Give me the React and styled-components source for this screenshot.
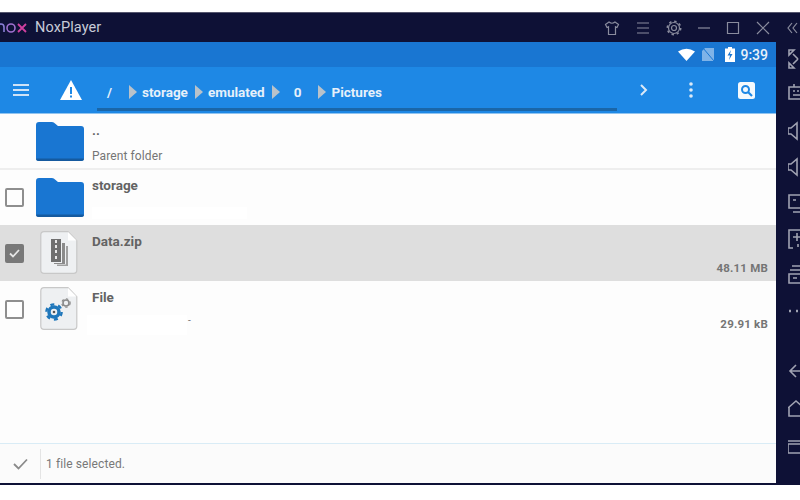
import React from 'react';
import styled, { createGlobalStyle } from 'styled-components';

const Global = createGlobalStyle`
  html, body { margin: 0; padding: 0; background: #fff; width: 800px; height: 500px; overflow: hidden; }
  body { font-family: Roboto, "Liberation Sans", sans-serif; }
`;
const Page = styled.div`
  width: 800px; height: 500px; padding-top: 12px; box-sizing: border-box; background: #fff; overflow: hidden;
`;
const Window = styled.div`
  width: 800px; height: 473px; background: #0e1136; border-top: 1px solid #55566e; box-sizing: border-box;
  display: flex; flex-direction: column; overflow: hidden;
`;
const TitleBar = styled.header`
  height: 29px; flex: none; display: flex; align-items: center; color: #c9cbd6;
`;
const Logo = styled.svg`
  width: 29px; height: 14px; flex: none; margin-left: -1px;
`;
const AppName = styled.span`
  font-size: 14.5px; color: #c8cbd8; margin-left: 7px; letter-spacing: .1px;
`;
const WinControls = styled.div`
  margin-left: auto; display: flex; align-items: center; width: 196px; flex: none; margin-right: 0; height: 100%;
`;
const WinButton = styled.svg`
  width: 16px; height: 16px; flex: none; margin-right: ${p => p.$gap}px;
  fill: none; stroke: #8a8c9e; stroke-width: 1.2;
`;
const Body = styled.div`
  flex: 1; display: flex; min-height: 0;
`;
const Screen = styled.main`
  width: 776px; flex: none; display: flex; flex-direction: column; background: #fdfdfd;
`;
const StatusBar = styled.div`
  height: 25px; flex: none; background: #1976d2; display: flex; align-items: center; justify-content: flex-end;
  padding-right: 8px; color: #e8f1fb; font-size: 14px; font-weight: 500;
`;
const StatusIcon = styled.svg`
  flex: none; margin-right: ${p => p.$gap}px;
`;
const Toolbar = styled.div`
  height: 46px; flex: none; background: #1e88e5; display: flex; align-items: center; color: #e9f2fb;
  border-bottom: 1px solid #90c4f0; box-sizing: content-box;
`;
const ToolIcon = styled.svg`
  flex: none; margin-left: ${p => p.$left}px;
`;
const Crumbs = styled.div`
  margin-left: 15px; width: 520px; height: 40px; margin-top: 2px; flex: none; box-sizing: border-box;
  display: flex; align-items: center; border-bottom: 3px solid #1a66a8; font-size: 13.5px; font-weight: 700; padding-top: 5px;
`;
const Crumb = styled.span`
  margin-left: ${p => p.$left}px; color: #e6f0fa;
`;
const Arrow = styled.i`
  flex: none; width: 0; height: 0; margin-left: ${p => p.$left}px;
  border-left: 8px solid #b9c2ca; border-top: 7px solid transparent; border-bottom: 7px solid transparent;
`;
const List = styled.div`
  flex: 1; min-height: 0; display: flex; flex-direction: column;
`;
const Row = styled.div`
  height: ${p => p.$h}px; flex: none; box-sizing: border-box; display: flex; position: relative;
  background: ${p => p.$selected ? '#dedede' : 'transparent'};
  border-bottom: ${p => p.$line ? '2px solid #eeeeee' : 'none'};
`;
const CheckSlot = styled.div`
  width: 28px; flex: none; display: flex; align-items: center; padding-left: 5px; box-sizing: border-box;
  padding-top: ${p => p.$top || 0}px;
`;
const Check = styled.div`
  width: 15px; height: 15px; border: 2px solid ${p => p.$on ? '#787878' : '#8e8e8e'}; border-radius: 2px;
  background: ${p => p.$on ? '#787878' : 'transparent'}; display: flex; align-items: center; justify-content: center;
`;
const IconSlot = styled.div`
  width: 64px; flex: none; display: flex; padding-left: ${p => p.$left}px; padding-top: ${p => p.$top}px; box-sizing: border-box;
`;
const Texts = styled.div`
  flex: 1; min-width: 0; display: flex; flex-direction: column; position: relative;
`;
const Name = styled.div`
  font-size: 13.5px; font-weight: 700; color: #636363; line-height: 16px; margin-top: ${p => p.$top}px;
`;
const Sub = styled.div`
  font-size: 12px; color: #757575; line-height: 14px; margin-top: ${p => p.$top}px; letter-spacing: .1px;
`;
const Redact = styled.div`
  width: ${p => p.$w}px; height: ${p => p.$h}px; background: #ffffff; margin-top: ${p => p.$top}px; margin-left: ${p => p.$left}px; flex: none;
  display: flex; align-items: center;
`;
const RedactRow = styled.div`
  display: flex; align-items: center; color: #777; font-size: 10px;
`;
const Dot = styled.span`
  margin-left: 1px; margin-top: 2px; line-height: 1;
`;
const Size = styled.div`
  position: absolute; right: 8px; bottom: ${p => p.$bottom}px; font-size: 11.5px; font-weight: 700; color: #757575; letter-spacing: .2px;
`;
const Footer = styled.footer`
  height: 40px; flex: none; border-top: 1px solid #d9ecf6; display: flex; align-items: center; background: #fbfbfb; box-sizing: border-box;
`;
const FooterIcon = styled.div`
  width: 40px; height: 30px; flex: none; border-right: 1px solid #e4e4e4; display: flex; align-items: center; justify-content: center;
  margin-top: 1px; box-sizing: content-box; padding-right: 0; width: 40px;
`;
const FooterText = styled.span`
  margin-left: 5px; font-size: 12px; color: #787878; letter-spacing: .1px;
`;
const WindowBottom = styled.div`
  height: 2px; flex: none; background: #0e1136;
`;
const Sidebar = styled.aside`
  flex: 1; min-width: 0; display: flex; flex-direction: column; overflow: hidden; padding-left: 12px;
`;
const SideIcon = styled.svg`
  flex: none; width: 24px; height: 24px; fill: none; stroke: #a0a2b2; stroke-width: 1.6; margin-top: ${p => p.$top}px;
`;

const Folder = () => (
  <svg width="48" height="39" viewBox="0 0 48 39">
    <path d="M3 0h13q2 0 3 1.5L22 4h23q3 0 3 3v29q0 3-3 3H3q-3 0-3-3V3q0-3 3-3z" fill="#1976d2" />
    <path d="M0 36.5h48q0 2.500-3 2.500H3q-3 0-3-2.500z" fill="#155a9f" />
  </svg>
);
const Doc = ({ children }) => (
  <svg width="38" height="43" viewBox="0 0 38 43">
    <path d="M4 .7h24l8.800 9V39q0 3.300-3.300 3.300H4Q.8 42.300.8 39V4Q.8.700 4 .7z" fill="#eef0f2" stroke="#c8c8c8" strokeWidth="1.200" />
    <path d="M28 1v8.500h8.500z" fill="#fff" />
    {children}
  </svg>
);
const Gear = ({ cx, cy, r, color, sw }) => (
  <g>
    <circle cx={cx} cy={cy} r={r} fill="none" stroke={color} strokeWidth={sw} />
    <circle cx={cx} cy={cy} r={r + sw * 0.75} fill="none" stroke={color} strokeWidth={sw * 0.7} strokeDasharray={`${r * 0.8} ${r * 0.8}`} />
  </g>
);

export default function App() {
  return (
    <Page>
      <Global />
      <Window>
        <TitleBar>
          <Logo viewBox="0 0 29 14">
            <path d="M-1 11V6q0-3 3-3t3 3v5" fill="none" stroke="#8a7fd8" strokeWidth="1.600" />
            <circle cx="12" cy="7" r="4" fill="none" stroke="#a070d0" strokeWidth="1.600" />
            <path d="M19 3l8 8M27 3l-8 8" stroke="#d040a0" strokeWidth="1.800" />
          </Logo>
          <AppName>NoxPlayer</AppName>
          <WinControls>
            <WinButton $gap={15} viewBox="0 0 16 16"><path d="M5 2L1.500 4.500l1.500 3 1.500-.7V14.500h7V6.800l1.500.7 1.500-3L11 2q-3 2.500-6 0z" /></WinButton>
            <WinButton $gap={15} viewBox="0 0 16 16"><path d="M2 3h12M2 8h12M2 13h12" /></WinButton>
            <WinButton $gap={14} viewBox="0 0 16 16"><circle cx="8" cy="8" r="2.500" /><circle cx="8" cy="8" r="5.500" /><circle cx="8" cy="8" r="6.700" strokeDasharray="2.400 2.860" strokeWidth="1.600" /></WinButton>
            <WinButton $gap={13} viewBox="0 0 16 16"><path d="M2 8h12" /></WinButton>
            <WinButton $gap={14} viewBox="0 0 16 16"><path d="M2.500 2.500h11v11h-11z" /></WinButton>
            <WinButton $gap={14} viewBox="0 0 16 16"><path d="M2 2l12 12M14 2L2 14" /></WinButton>
            <WinButton $gap={0} viewBox="0 0 16 16"><path d="M7 3L3 8l4 5M12 3L8 8l4 5" /></WinButton>
          </WinControls>
        </TitleBar>
        <Body>
          <Screen>
            <StatusBar>
              <StatusIcon $gap={7} width="17" height="13" viewBox="0 0 17 13"><path d="M0 3.500Q8.500-2 17 3.500L8.500 13z" fill="#fff" /></StatusIcon>
              <StatusIcon $gap={11} width="12" height="13" viewBox="0 0 12 13"><path d="M3 0h9v13H0V3z" fill="#7fb3e8" /><path d="M1 0l11 13" stroke="#1976d2" strokeWidth="1" /></StatusIcon>
              <StatusIcon $gap={5} width="10" height="15" viewBox="0 0 10 15"><path d="M3 0h4v1.500h3V15H0V1.500h3z" fill="#fff" /><path d="M6 3L2.500 8.500H5L4 13l3.500-6H5z" fill="#1976d2" /></StatusIcon>
              <span>9:39</span>
            </StatusBar>
            <Toolbar>
              <ToolIcon $left={12} width="18" height="14" viewBox="0 0 18 14"><path d="M1 2h16M1 7h16M1 12h16" stroke="#cfe3f7" strokeWidth="2" /></ToolIcon>
              <ToolIcon $left={30} width="22" height="20" viewBox="0 0 22 20"><path d="M11 0l11 20H0z" fill="#fff" /><path d="M10 7h2v7h-2zM10 15.500h2v2h-2z" fill="#1e88e5" /></ToolIcon>
              <Crumbs>
                <Crumb $left={10}>/</Crumb>
                <Arrow $left={17} />
                <Crumb $left={5}>storage</Crumb>
                <Arrow $left={7} />
                <Crumb $left={5}>emulated</Crumb>
                <Arrow $left={7} />
                <Crumb $left={14}>0</Crumb>
                <Arrow $left={17} />
                <Crumb $left={5}>Pictures</Crumb>
              </Crumbs>
              <ToolIcon $left={22} width="10" height="12" viewBox="0 0 10 12"><path d="M2 1l5 5-5 5" fill="none" stroke="#dbe9f7" strokeWidth="2" /></ToolIcon>
              <ToolIcon $left={40} width="4" height="16" viewBox="0 0 4 16"><circle cx="2" cy="2" r="1.800" fill="#dbe9f7" /><circle cx="2" cy="8" r="1.800" fill="#dbe9f7" /><circle cx="2" cy="14" r="1.800" fill="#dbe9f7" /></ToolIcon>
              <ToolIcon $left={45} width="17" height="17" viewBox="0 0 17 17"><rect width="17" height="17" rx="2.500" fill="#f4f9fd" /><circle cx="7.500" cy="7.500" r="3.500" fill="none" stroke="#1e88e5" strokeWidth="2" /><path d="M10 10l4 4" stroke="#1e88e5" strokeWidth="2.200" /></ToolIcon>
            </Toolbar>
            <List>
              <Row $h={56} $line>
                <CheckSlot />
                <IconSlot $left={8} $top={8}><Folder /></IconSlot>
                <Texts><Name $top={8}>..</Name><Sub $top={11}>Parent folder</Sub></Texts>
              </Row>
              <Row $h={55}>
                <CheckSlot $top={0}><Check /></CheckSlot>
                <IconSlot $left={8} $top={8}><Folder /></IconSlot>
                <Texts><Name $top={7}><span>storage</span></Name><Redact $w={155} $h={12} $top={14} $left={0} /></Texts>
              </Row>
              <Row $h={56} $selected>
                <CheckSlot>
                  <Check $on>
                    <svg width="11" height="9" viewBox="0 0 11 9"><path d="M1 4.500l3 3 6-6.500" fill="none" stroke="#e6e6e6" strokeWidth="1.800" /></svg>
                  </Check>
                </CheckSlot>
                <IconSlot $left={12} $top={6}>
                  <Doc>
                    <path d="M11 8h10v23H11z" fill="#6f6f6f" />
                    <path d="M22 12h3v21H14v-1h8z" fill="#8a8a8a" />
                    <path d="M26 15h2v20H17v-1.500h9z" fill="#a0a0a0" />
                    <path d="M15 9h2v3h-2zM15 14h2v3h-2zM15 19h2v3h-2zM15 25h2v3h-2z" fill="#e8e8e8" />
                  </Doc>
                </IconSlot>
                <Texts><Name $top={8}>Data.zip</Name><Size $bottom={6}>48.11 MB</Size></Texts>
              </Row>
              <Row $h={56}>
                <CheckSlot><Check /></CheckSlot>
                <IconSlot $left={12} $top={6}>
                  <Doc>
                    <Gear cx={14} cy={25} r={5} color="#1f77bb" sw={3.500} />
                    <circle cx={14} cy={25} r={1.300} fill="#555" />
                    <Gear cx={26} cy={16} r={3} color="#8a8a8a" sw={1.600} />
                  </Doc>
                </IconSlot>
                <Texts>
                  <Name $top={8}>File</Name>
                  <RedactRow><Redact $w={100} $h={20} $top={10} $left={-5} /><Dot>-</Dot></RedactRow>
                  <Size $bottom={6}>29.91 kB</Size>
                </Texts>
              </Row>
            </List>
            <Footer>
              <FooterIcon>
                <svg width="15" height="12" viewBox="0 0 15 12"><path d="M1 6l4.500 4.500L14 1.500" fill="none" stroke="#8a8a8a" strokeWidth="1.800" /></svg>
              </FooterIcon>
              <FooterText>1 file selected.</FooterText>
            </Footer>
            <WindowBottom />
          </Screen>
          <Sidebar>
            <SideIcon $top={7} viewBox="0 0 24 24" style={{ marginLeft: 0 }}><path d="M1 1h5L1 6zM10 10l-5-5M1 19h5l-5-5zM5 15l5-5" /></SideIcon>
            <SideIcon $top={8} viewBox="0 0 24 24"><path d="M1 6h20v12H1zM5 10h2M9 10h2M13 10h2M5 14h10M6 6V3" /></SideIcon>
            <SideIcon $top={14} viewBox="0 0 24 24"><path d="M0 9h3l6-5v16l-6-5H0z" /></SideIcon>
            <SideIcon $top={12} viewBox="0 0 24 24"><path d="M0 9h3l6-5v16l-6-5H0z" /></SideIcon>
            <SideIcon $top={12} viewBox="0 0 24 24"><path d="M1 4h20v13H1zM5 9h3M5 21h16" /></SideIcon>
            <SideIcon $top={12} viewBox="0 0 24 24"><path d="M14 3H1v18h4M5 10h8M9 6v8M10 20v-3M14 20v-3" /></SideIcon>
            <SideIcon $top={12} viewBox="0 0 24 24"><path d="M4 3h16M2 7h18M1 11h20v9H1zM5 15h4" /></SideIcon>
            <SideIcon $top={12} viewBox="0 0 24 24"><path d="M1 12h2M8 12h2" strokeWidth="2.500" /></SideIcon>
            <SideIcon $top={37} viewBox="0 0 24 24"><path d="M8 5l-6 6 6 6M2 11h14" /></SideIcon>
            <SideIcon $top={13} viewBox="0 0 24 24"><path d="M0 11l8-7 8 7M1 10v9h14" /></SideIcon>
            <SideIcon $top={13} viewBox="0 0 24 24"><path d="M0 7h14M0 10h14v9H0z" /></SideIcon>
          </Sidebar>
        </Body>
      </Window>
    </Page>
  );
}
